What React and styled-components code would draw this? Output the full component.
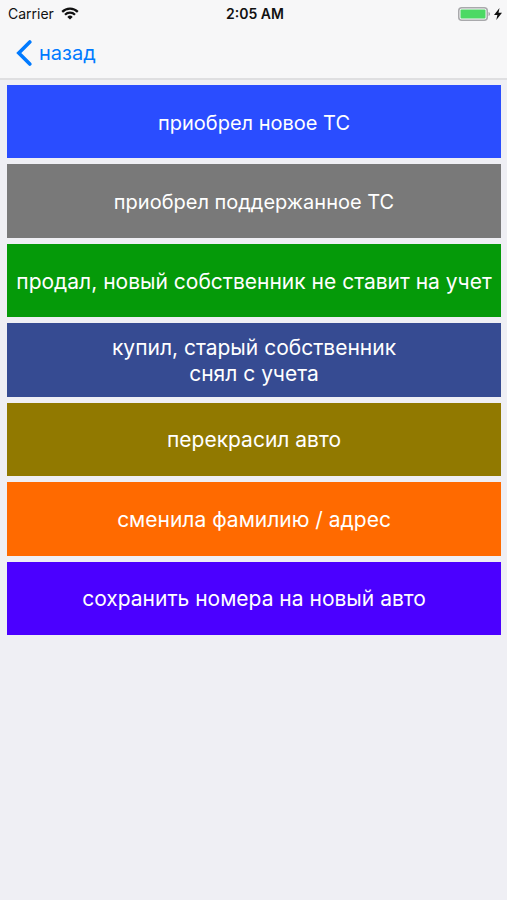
import React from "react";
import styled, { createGlobalStyle } from "styled-components";

const GlobalStyle = createGlobalStyle`
  * {
    box-sizing: border-box;
  }
  body {
    margin: 0;
    background: #efeff4;
    font-family: Inter, "Liberation Sans", sans-serif;
  }
`;

const Screen = styled.div`
  min-height: 100vh;
  background: #efeff4;
`;

const Header = styled.header`
  background: #f7f7f8;
  border-bottom: 2px solid #dfdfe1;
`;

const StatusBar = styled.div`
  display: grid;
  grid-template-columns: 1fr auto 1fr;
  align-items: center;
  height: 27px;
  padding: 0 5px 0 8px;
  font-size: 14px;
  color: #111111;
`;

const StatusGroup = styled.div`
  display: flex;
  align-items: center;
  gap: ${(props) => props.$gap};
  justify-content: ${(props) => (props.$end ? "flex-end" : "flex-start")};
`;

const Clock = styled.time`
  font-weight: 600;
`;

const NavBar = styled.nav`
  display: flex;
  align-items: center;
  height: 51px;
  padding: 0 16px;
`;

const BackButton = styled.button`
  display: flex;
  align-items: center;
  gap: 7px;
  padding: 0;
  border: none;
  background: none;
  color: #007aff;
  font-family: inherit;
  font-size: 20px;
  cursor: pointer;
`;

const List = styled.main`
  display: grid;
  grid-auto-rows: 1fr;
  gap: 6px;
  min-height: 62vh;
  padding: 5px 6px 3px 7px;
`;

const OptionButton = styled.button`
  padding: 2px 4px 0;
  border: none;
  background: ${(props) => props.$color};
  color: #ffffff;
  font-family: inherit;
  font-size: ${(props) => (props.$small ? "20px" : "21px")};
  line-height: 26px;
  white-space: pre-line;
  cursor: pointer;
`;

const options = [
  { text: "приобрел новое ТС", color: "#2a4dff", small: true },
  { text: "приобрел поддержанное ТС", color: "#797979", small: true },
  { text: "продал, новый собственник не ставит на учет", color: "#059a09" },
  { text: "купил, старый собственник\nснял с учета", color: "#364b92" },
  { text: "перекрасил авто", color: "#917900" },
  { text: "сменила фамилию / адрес", color: "#ff6a00" },
  { text: "сохранить номера на новый авто", color: "#4b00ff" },
];

function WifiIcon() {
  return (
    <svg width="18" height="13" viewBox="0 0 18 13" fill="none" stroke="#111111" strokeWidth="2.2">
      <path d="M1.2 4.9a11 11 0 0 1 15.6 0" />
      <path d="M4 7.8a7 7 0 0 1 10 0" />
      <path d="M9 12.6 6.3 9.9a3.9 3.9 0 0 1 5.4 0z" fill="#111111" stroke="none" />
    </svg>
  );
}

function BatteryIcon() {
  return (
    <svg width="33" height="14" viewBox="0 0 33 14">
      <rect x="0.75" y="0.75" width="28.500" height="12.500" rx="3" fill="none" stroke="#a9a9ac" strokeWidth="1.5" />
      <rect x="2.500" y="2.500" width="25" height="9" rx="1" fill="#4cd964" />
      <path d="M30.500 5v4c1-.3 1.600-1.100 1.600-2s-.6-1.700-1.600-2z" fill="#a9a9ac" />
    </svg>
  );
}

function BoltIcon() {
  return (
    <svg width="8" height="12" viewBox="0 0 8 12">
      <path d="M5.500 0 0 7h3.400L2.300 12 8 4.800H4.500z" fill="#111111" />
    </svg>
  );
}

function ChevronIcon() {
  return (
    <svg
      width="16"
      height="28"
      viewBox="0 0 16 28"
      fill="none"
      stroke="#007aff"
      strokeWidth="3.6"
      strokeLinecap="round"
    >
      <path d="M13.800 3 2.800 14l11 11" />
    </svg>
  );
}

export default function App() {
  return (
    <>
      <GlobalStyle />
      <Screen>
        <Header>
          <StatusBar>
            <StatusGroup $gap="7px">
              <span>Carrier</span>
              <WifiIcon />
            </StatusGroup>
            <Clock>2:05 AM</Clock>
            <StatusGroup $gap="3px" $end>
              <BatteryIcon />
              <BoltIcon />
            </StatusGroup>
          </StatusBar>
          <NavBar>
            <BackButton type="button">
              <ChevronIcon />
              <span>назад</span>
            </BackButton>
          </NavBar>
        </Header>
        <List>
          {options.map((option) => (
            <OptionButton key={option.text} type="button" $color={option.color} $small={option.small}>
              {option.text}
            </OptionButton>
          ))}
        </List>
      </Screen>
    </>
  );
}
